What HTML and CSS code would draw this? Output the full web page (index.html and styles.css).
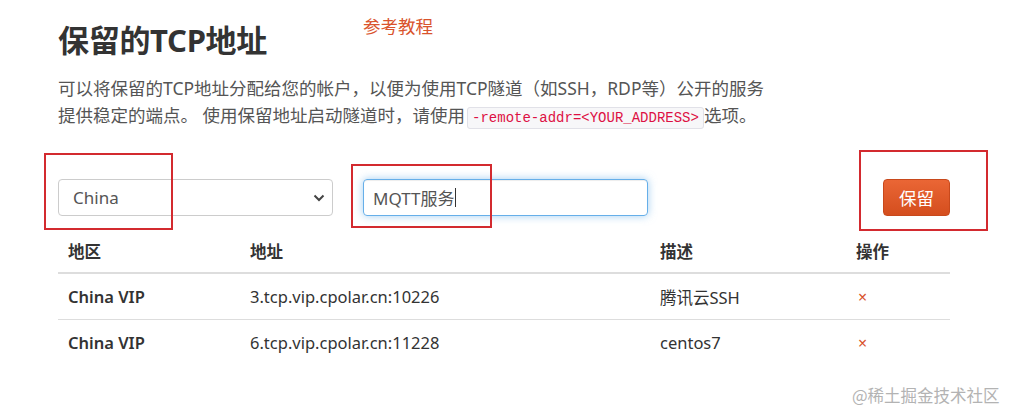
FILE: index.html
```html
<!DOCTYPE html>
<html lang="zh">
<head>
<meta charset="utf-8">
<title>保留的TCP地址</title>
<link rel="stylesheet" href="styles.css">
</head>
<body>
<div class="page">
  <div class="header">
    <h1 class="title">保留的TCP地址</h1>
    <a class="tutorial" href="#">参考教程</a>
  </div>
  <p class="desc">可以将保留的TCP地址分配给您的帐户，以便为使用TCP隧道（如SSH，RDP等）公开的服务<br>提供稳定的端点。 使用保留地址启动隧道时，请使用<code class="code">-remote-addr=&lt;YOUR_ADDRESS&gt;</code>选项。</p>
  <div class="form-row">
    <div class="select">
      <span>China</span>
      <svg class="chev" width="12" height="8" viewBox="0 0 12 8"><path d="M1.5 1.5 L6 6 L10.5 1.5" fill="none" stroke="#444" stroke-width="2"/></svg>
    </div>
    <div class="input"><span>MQTT服务</span><span class="caret"></span></div>
    <button class="btn">保留</button>
  </div>
  <table class="table">
    <thead>
      <tr><th class="c1">地区</th><th class="c2">地址</th><th class="c3">描述</th><th class="c4">操作</th></tr>
    </thead>
    <tbody>
      <tr><td class="strong">China VIP</td><td>3.tcp.vip.cpolar.cn:10226</td><td>腾讯云SSH</td><td><span class="del">×</span></td></tr>
      <tr><td class="strong">China VIP</td><td>6.tcp.vip.cpolar.cn:11228</td><td>centos7</td><td><span class="del">×</span></td></tr>
    </tbody>
  </table>
</div>
<div class="mark mark1"></div>
<div class="mark mark2"></div>
<div class="mark mark3"></div>
<div class="watermark">@稀土掘金技术社区</div>
</body>
</html>
```
FILE: styles.css
```css
html, body {
  margin: 0;
  padding: 0;
  background: #fff;
}
body {
  width: 1019px;
  height: 414px;
  overflow: hidden;
  position: relative;
  font-family: "Noto Sans", "Noto Sans CJK SC", sans-serif;
  color: #333;
}
.page {
  padding: 0 0 0 58px;
  width: 892px;
}
.header {
  display: flex;
  align-items: flex-start;
  height: 75px;
}
.title {
  margin: 21px 0 0 0;
  font-size: 31px;
  line-height: 38px;
  font-weight: 700;
  color: #333;
  font-family: "Noto Sans", "Noto Sans CJK SC", sans-serif;
  letter-spacing: -0.3px;
}
.tutorial {
  margin: 13px 0 0 96px;
  color: #d9532c;
  font-size: 17.5px;
  line-height: 26px;
  text-decoration: none;
}
.desc {
  margin: 0;
  font-size: 17.5px;
  line-height: 27px;
  color: #555;
}
.code {
  font-family: "Liberation Mono", monospace;
  font-size: 14px;
  color: #dd1144;
  background: #f7f7f9;
  border: 1px solid #e1e1e8;
  border-radius: 3px;
  padding: 2px 4px;
  margin-left: 2px;
}
.form-row {
  display: flex;
  align-items: center;
  margin-top: 47px;
  height: 37px;
}
.select {
  box-sizing: border-box;
  width: 275px;
  height: 37px;
  border: 1px solid #ccc;
  border-radius: 4px;
  display: flex;
  align-items: center;
  justify-content: space-between;
  padding: 0 7px 0 14px;
  font-size: 17px;
  color: #555;
}
.chev {
  display: block;
}
.input {
  box-sizing: border-box;
  margin-left: 30px;
  width: 285px;
  height: 37px;
  border: 1px solid #66afe9;
  border-radius: 4px;
  box-shadow: 0 0 8px rgba(102, 175, 233, 0.6), inset 0 1px 1px rgba(0, 0, 0, 0.075);
  display: flex;
  align-items: center;
  padding: 0 9px;
  font-size: 17px;
  color: #555;
}
.caret {
  display: inline-block;
  width: 1px;
  height: 19px;
  background: #333;
  margin-left: 1px;
}
.btn {
  margin-left: 235px;
  width: 67px;
  height: 37px;
  border: 1px solid #c8491c;
  border-radius: 4px;
  background: linear-gradient(#ea6635, #d44e1e);
  color: #fff;
  font-size: 17.5px;
  font-family: "Noto Sans CJK SC", sans-serif;
  padding: 0;
}
.table {
  margin-top: 14px;
  width: 892px;
  border-collapse: collapse;
  font-size: 16.5px;
  color: #333;
}
.table th {
  text-align: left;
  font-weight: 700;
  height: 42px;
  padding: 0 10px;
  border-bottom: 2px solid #ddd;
  vertical-align: middle;
}
.table td {
  height: 45px;
  padding: 0 10px;
  vertical-align: middle;
}
.table tbody tr:first-child td {
  border-bottom: 1px solid #ddd;
}
.c1 { width: 162px; }
.c2 { width: 390px; }
.c3 { width: 176px; }
.strong {
  font-weight: 600;
}
.del {
  color: #d9532c;
  font-size: 16px;
  padding-left: 2px;
}
.mark {
  position: absolute;
  border: 2px solid #d32a2f;
  box-sizing: border-box;
}
.mark1 { left: 44px; top: 153px; width: 129px; height: 77px; }
.mark2 { left: 351px; top: 164px; width: 141px; height: 64px; }
.mark3 { left: 859px; top: 150px; width: 129px; height: 81px; }
.watermark {
  position: absolute;
  left: 852px;
  top: 383px;
  font-size: 16.5px;
  line-height: 24px;
  color: #b3b3b3;
  font-family: "Noto Sans CJK SC", sans-serif;
  white-space: nowrap;
}
```
